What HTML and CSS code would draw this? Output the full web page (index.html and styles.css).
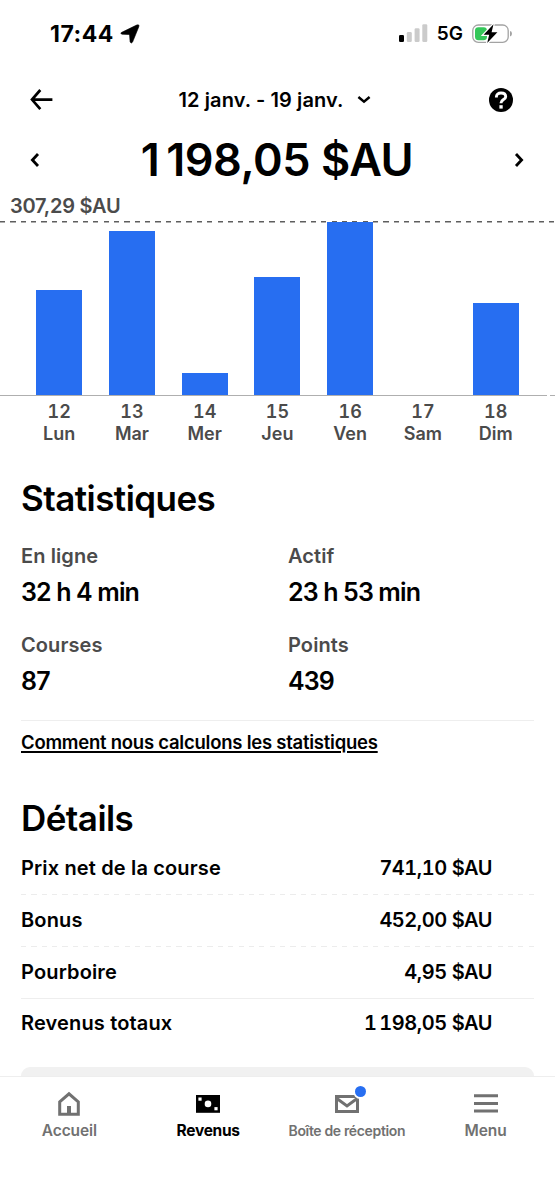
FILE: index.html
```html
<!DOCTYPE html>
<html lang="fr">
<head>
    <meta charset="UTF-8">
    <meta name="viewport" content="width=device-width, initial-scale=1.0">
    <title>Revenus</title>
    <link rel="stylesheet" href="styles.css">
</head>
<body>

    <!-- Barre d'état -->
    <div class="status-bar">
        <span class="time">17:44</span>
        <svg class="location" width="20" height="20" viewBox="0 0 20 20">
            <path d="M1.8 8.3 L16.6 1.1 Q19.8 0 18.7 3 L12.6 18 Q11.4 20 10.1 18 L9.6 11.6 Q9.5 10.6 8.5 10.5 L2 10.2 Q-.4 9.4 1.8 8.3Z" stroke="#000" stroke-width=".6"/>
        </svg>
        <svg class="signal" width="29" height="19" viewBox="0 0 29 19">
            <rect x="0" y="11" width="5" height="7" rx="1.3" fill="#000"/>
            <rect x="7.8" y="8" width="5" height="10" rx="1.3" fill="#cbcbcb"/>
            <rect x="15.6" y="4.2" width="5" height="13.8" rx="1.3" fill="#cbcbcb"/>
            <rect x="23.3" y="0.2" width="5" height="17.8" rx="1.3" fill="#cbcbcb"/>
        </svg>
        <span class="network">5G</span>
        <svg class="battery" width="41" height="20" viewBox="0 0 41 20">
            <rect x=".8" y="1" width="35.4" height="17.4" rx="5.5" fill="none" stroke="#a3a3a3" stroke-width="1.3"/>
            <path d="M38 7 Q40 7.4 40 9.7 Q40 12 38 12.4Z" fill="#a3a3a3"/>
            <rect x="3" y="3.2" width="12" height="13" rx="3.4" fill="#34c759"/>
            <path d="M21.5 .3 L11.6 10.7 H17.2 L15.2 19 L25.4 8.3 H19.6Z" fill="#000" stroke="#fff" stroke-width="2.4" paint-order="stroke"/>
        </svg>
    </div>

    <!-- Choix de la période -->
    <header class="period">
        <svg width="24" height="22" viewBox="0 0 24 22">
            <path d="M10.3 1 L2 10.6 L10.3 20.2 M2 10.6 H22.4" fill="none" stroke="#000" stroke-width="2.7"/>
        </svg>
        <div class="period-select">
            <span>12 janv. - 19 janv.</span>
            <svg width="14" height="10" viewBox="0 0 14 10">
                <path d="M1.4 2 L7 6.6 L12.6 2" fill="none" stroke="#000" stroke-width="2.5"/>
            </svg>
        </div>
        <svg width="24" height="24" viewBox="0 0 24 24">
            <circle cx="12" cy="12" r="12"/>
            <path d="M7.4 9.6 V8.8 C7.4 6.6 9.2 5 12 5 C14.9 5 16.7 6.5 16.7 8.7 C16.7 11.6 12 11.5 12 14.9 V15.3" fill="none" stroke="#fff" stroke-width="2.9"/>
            <rect x="10.4" y="17.2" width="3.3" height="3.4" fill="#fff"/>
        </svg>
    </header>

    <div class="total">
        <svg width="10" height="14" viewBox="0 0 10 14">
            <path d="M8 1 L2.4 7 L8 13" fill="none" stroke="#000" stroke-width="2.8"/>
        </svg>
        <h1>1&#8239;198,05 $AU</h1>
        <svg width="10" height="14" viewBox="0 0 10 14">
            <path d="M2 1 L7.6 7 L2 13" fill="none" stroke="#000" stroke-width="2.8"/>
        </svg>
    </div>

    <!-- Graphique de la semaine -->
    <section class="chart">
        <p class="chart-max">307,29 $AU</p>
        <div class="bars">
            <div class="bar" style="height: 105px"></div>
            <div class="bar" style="height: 164px"></div>
            <div class="bar" style="height: 22px"></div>
            <div class="bar" style="height: 118px"></div>
            <div class="bar" style="height: 173px"></div>
            <div class="bar" style="height: 0px"></div>
            <div class="bar" style="height: 92px"></div>
        </div>
        <div class="axis"><span></span><span></span></div>
        <div class="days">
            <div>12<br>Lun</div>
            <div>13<br>Mar</div>
            <div>14<br>Mer</div>
            <div>15<br>Jeu</div>
            <div>16<br>Ven</div>
            <div>17<br>Sam</div>
            <div>18<br>Dim</div>
        </div>
    </section>

    <section class="stats">
        <h2>Statistiques</h2>
        <div class="stats-grid">
            <div class="stat">
                <p class="label">En ligne</p>
                <p class="value">32 h 4 min</p>
            </div>
            <div class="stat">
                <p class="label">Actif</p>
                <p class="value">23 h 53 min</p>
            </div>
            <div class="stat">
                <p class="label">Courses</p>
                <p class="value">87</p>
            </div>
            <div class="stat">
                <p class="label">Points</p>
                <p class="value">439</p>
            </div>
        </div>
        <a class="how" href="#">Comment nous calculons les statistiques</a>
    </section>

    <section class="details">
        <h2>Détails</h2>
        <div class="row dashed"><span>Prix net de la course</span><span class="amount">741,10 $AU</span></div>
        <div class="row dashed"><span>Bonus</span><span class="amount">452,00 $AU</span></div>
        <div class="row solid"><span>Pourboire</span><span class="amount">4,95 $AU</span></div>
        <div class="row sum"><span>Revenus totaux</span><span class="amount">1&#8239;198,05 $AU</span></div>
        <div class="card"></div>
    </section>

    <!-- Navigation -->
    <nav>
        <a class="tab" href="#">
            <svg width="24" height="26" viewBox="0 0 24 26">
                <path d="M2.7 10.9 L12 2.8 L21.3 10.9 V23.2 H2.7Z" fill="none" stroke="#717171" stroke-width="3"/>
                <rect x="10" y="15" width="4" height="8.5" fill="#717171"/>
            </svg>
            <span>Accueil</span>
        </a>
        <a class="tab active" href="#">
            <svg width="24" height="26" viewBox="0 0 24 26">
                <rect x="0" y="4" width="24" height="17.8"/>
                <circle cx="12" cy="12.9" r="3.3" fill="#fff"/>
                <rect x="2.4" y="6.5" width="3.2" height="3.2" fill="#fff"/>
                <rect x="18.4" y="16.1" width="3.2" height="3.2" fill="#fff"/>
            </svg>
            <span>Revenus</span>
        </a>
        <a class="tab inbox" href="#">
            <div class="icon">
                <svg width="24" height="26" viewBox="0 0 24 26">
                    <path d="M1.5 5.5 H22.5 V20.5 H1.5Z M1.5 7.3 L12 15 L22.5 7.3" fill="none" stroke="#717171" stroke-width="3"/>
                </svg>
                <i class="badge"></i>
            </div>
            <span>Boîte de réception</span>
        </a>
        <a class="tab" href="#">
            <svg width="24" height="26" viewBox="0 0 24 26">
                <path d="M0 4.7 H24 M0 12.4 H24 M0 19.9 H24" stroke="#717171" stroke-width="3"/>
            </svg>
            <span>Menu</span>
        </a>
    </nav>

</body>
</html>
```
FILE: styles.css
```css
body {
    margin: 0;
    height: 1200px;
    display: flex;
    flex-direction: column;
    font-family: Inter, "Liberation Sans", sans-serif;
    font-weight: 600;
    background-color: #fff;
    color: #000;
    overflow: hidden;
}

h1, h2, p {
    margin: 0;
    font-weight: 600;
}

a {
    color: inherit;
}

svg {
    display: block;
    flex: none;
}

.status-bar {
    display: flex;
    align-items: center;
    height: 67px;
    padding: 0 42px 0 50px;
}

.time {
    font-size: 23px;
    font-weight: 700;
    letter-spacing: 0.5px;
}

.location {
    margin-left: 6px;
}

.signal {
    margin-left: auto;
}

.network {
    font-size: 19px;
    margin: 0 9px;
}

.period {
    display: flex;
    align-items: center;
    justify-content: space-between;
    height: 66px;
    padding: 0 42px 0 30px;
}

.period-select {
    display: flex;
    align-items: center;
    gap: 14px;
    font-size: 20px;
    letter-spacing: 0.1px;
    margin-right: -7px;
}

.total {
    display: flex;
    align-items: center;
    justify-content: space-between;
    height: 54px;
    padding: 0 31px 0 30px;
}

h1 {
    font-size: 45px;
    line-height: 54px;
    letter-spacing: -0.5px;
}

.chart {
    color: #4b4b4b;
}

.chart-max {
    height: 34px;
    padding-left: 10px;
    font-size: 20px;
    line-height: 39px;
    letter-spacing: -0.25px;
}

.bars {
    display: grid;
    grid-template-columns: repeat(7, 72.75px);
    justify-items: center;
    align-items: end;
    height: 174px;
    padding-left: 22.8px;
    background: repeating-linear-gradient(90deg, #5e5e5e 0, #5e5e5e 5.2px, transparent 5.2px, transparent 10.36px) 0 0 / 100% 1.5px no-repeat;
}

.bar {
    width: 46px;
    background-color: #276ef1;
}

.axis {
    display: grid;
    grid-template-columns: 547px 1fr;
    gap: 3px;
    height: 1px;
}

.axis span {
    background-color: #afafaf;
}

.days {
    display: grid;
    grid-template-columns: repeat(7, 72.75px);
    padding: 5px 0 0 22.8px;
    text-align: center;
    font-size: 18px;
    line-height: 22px;
    font-feature-settings: "tnum";
}

.stats {
    padding: 30px 21px 0;
}

h2 {
    font-size: 35px;
    line-height: 46px;
    letter-spacing: -0.55px;
}

.stats-grid {
    display: grid;
    grid-template-columns: 267px 1fr;
    row-gap: 17px;
    padding: 18px 0 20px;
    border-bottom: 1px solid #eee;
}

.label {
    font-size: 20px;
    line-height: 34px;
    letter-spacing: 0.1px;
    color: #4b4b4b;
}

.value {
    font-size: 25px;
    line-height: 38px;
    letter-spacing: -0.87px;
}

.how {
    display: block;
    padding-top: 8px;
    font-size: 18.5px;
    line-height: 26px;
    letter-spacing: -0.24px;
    text-underline-offset: 2px;
    text-decoration-thickness: 1.5px;
}

.details {
    padding: 40px 21px 0;
}

.details h2 {
    height: 48px;
}

.row {
    display: flex;
    justify-content: space-between;
    height: 51px;
    padding-right: 42px;
    font-size: 20px;
    line-height: 51px;
    letter-spacing: 0.15px;
    border-bottom: 1px solid transparent;
}

.dashed {
    background: repeating-linear-gradient(90deg, #ececec 0, #ececec 5.2px, transparent 5.2px, transparent 10.36px) 0 100% / 100% 1px no-repeat border-box;
}

.solid {
    border-bottom-color: #eee;
}

.sum {
    height: 49px;
    line-height: 49px;
}

.amount {
    letter-spacing: -0.45px;
    font-feature-settings: "tnum";
}

.card {
    height: 60px;
    margin-top: 18px;
    border-radius: 9px;
    background-color: #f1f1f1;
}

nav {
    position: fixed;
    left: 0;
    right: 0;
    bottom: 0;
    display: grid;
    grid-template-columns: repeat(4, 1fr);
    height: 123px;
    border-top: 1px solid #eee;
    background-color: #fff;
}

.tab {
    display: flex;
    flex-direction: column;
    align-items: center;
    padding-top: 14px;
    font-size: 15.5px;
    line-height: 28px;
    letter-spacing: -0.1px;
    text-decoration: none;
    white-space: nowrap;
    color: #717171;
}

.active {
    font-weight: 700;
    letter-spacing: -0.3px;
    color: #000;
}

.inbox {
    font-size: 14px;
    letter-spacing: -0.35px;
}

.icon {
    position: relative;
}

.badge {
    position: absolute;
    top: -5px;
    right: -7px;
    width: 11px;
    height: 11px;
    border-radius: 50%;
    background-color: #276ef1;
    box-shadow: 0 0 0 2px #fff;
}
```
